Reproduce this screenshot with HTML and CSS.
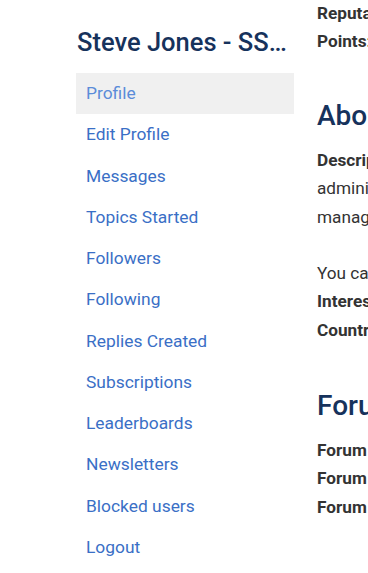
FILE: index.html
```html
<!DOCTYPE html>
<html lang="en">
<head>
<meta charset="utf-8">
<link rel="stylesheet" href="styles.css">
</head>
<body>
<div class="page">
  <aside class="sidebar">
    <h2 class="user-name">Steve Jones - SSC Editor</h2>
    <nav class="menu">
      <a class="menu-item active" href="#">Profile</a>
      <a class="menu-item" href="#">Edit Profile</a>
      <a class="menu-item" href="#">Messages</a>
      <a class="menu-item" href="#">Topics Started</a>
      <a class="menu-item" href="#">Followers</a>
      <a class="menu-item" href="#">Following</a>
      <a class="menu-item" href="#">Replies Created</a>
      <a class="menu-item" href="#">Subscriptions</a>
      <a class="menu-item" href="#">Leaderboards</a>
      <a class="menu-item" href="#">Newsletters</a>
      <a class="menu-item" href="#">Blocked users</a>
      <a class="menu-item" href="#">Logout</a>
    </nav>
  </aside>
  <main class="content">
    <p class="line"><b>Reputation:</b> 1,000</p>
    <p class="line"><b>Points:</b> 250,000</p>
    <h2 class="section-title about-title">About</h2>
    <p class="line"><b>Description:</b></p>
    <p class="line">administrator and</p>
    <p class="line">manager of the site</p>
    <p class="line blank">&nbsp;</p>
    <p class="line">You can find me here</p>
    <p class="line"><b>Interests:</b> SQL</p>
    <p class="line"><b>Country:</b> USA</p>
    <h2 class="section-title forum-title">Forum Statistics</h2>
    <p class="line"><b>Forum Role:</b> Keymaster</p>
    <p class="line"><b>Forum Topics:</b> 100</p>
    <p class="line"><b>Forum Replies:</b> 200</p>
  </main>
</div>
</body>
</html>
```
FILE: styles.css
```css
html, body {
  margin: 0;
  padding: 0;
  background: #ffffff;
  overflow: hidden;
}
body {
  font-family: Roboto, "Liberation Sans", sans-serif;
  width: 368px;
  height: 573px;
}
.page {
  display: grid;
  grid-template-columns: 218px 260px;
  column-gap: 23px;
  padding-left: 76px;
  width: 620px;
}
.sidebar {
  padding-top: 27px;
}
.user-name {
  margin: 0 0 16px 0;
  font-size: 25.5px;
  font-weight: 500;
  color: #16325c;
  line-height: 30px;
  white-space: nowrap;
  overflow: hidden;
  text-overflow: ellipsis;
  padding-left: 1px;
}
.menu {
  display: flex;
  flex-direction: column;
}
.menu-item {
  display: block;
  height: 41.27px;
  line-height: 41px;
  padding-left: 10px;
  font-size: 17.4px;
  color: #3a6fc6;
  text-decoration: none;
}
.menu-item.active {
  background: #f0f0f0;
  color: #5b8cd9;
}
.content {
  margin-top: -1px;
  color: #333333;
  font-size: 17.2px;
  white-space: nowrap;
}
.line {
  margin: 0;
  line-height: 28.3px;
}
.line b {
  font-weight: 700;
}
.section-title {
  font-size: 28px;
  font-weight: 500;
  color: #16325c;
  line-height: 32px;
}
.about-title {
  margin: 44.4px 0 14px 0;
}
.forum-title {
  margin: 46px 0 14px 0;
}
```
